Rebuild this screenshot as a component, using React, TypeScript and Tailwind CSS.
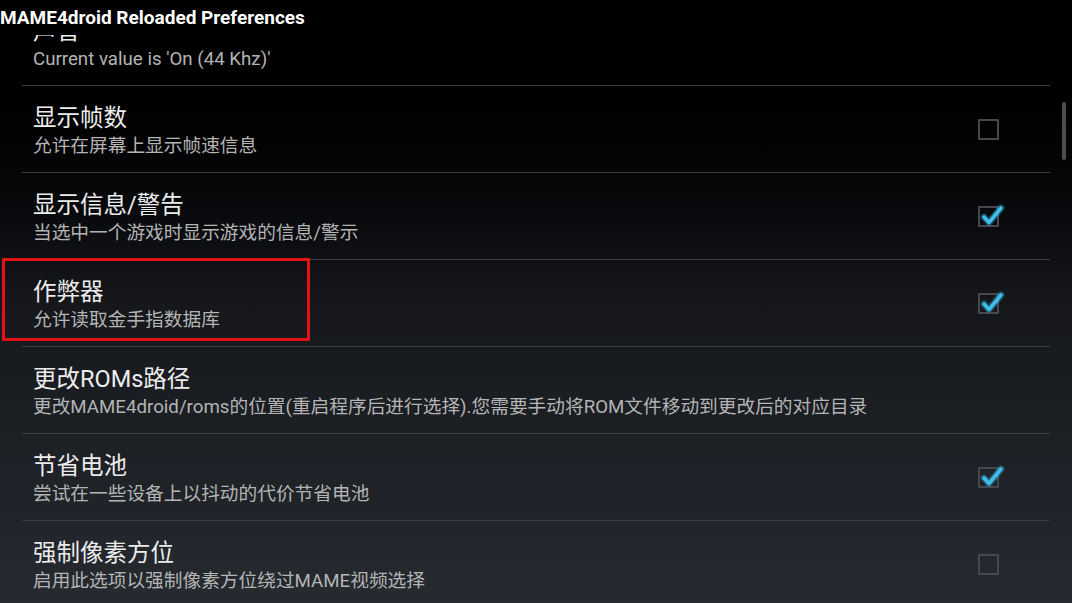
import React from "react";

type Row = { title: string; sub: string; check?: boolean | null };

const rows: Row[] = [
  { title: "声音", sub: "Current value is 'On (44 Khz)'", check: null },
  { title: "显示帧数", sub: "允许在屏幕上显示帧速信息", check: false },
  { title: "显示信息/警告", sub: "当选中一个游戏时显示游戏的信息/警示", check: true },
  { title: "作弊器", sub: "允许读取金手指数据库", check: true },
  { title: "更改ROMs路径", sub: "更改MAME4droid/roms的位置(重启程序后进行选择).您需要手动将ROM文件移动到更改后的对应目录", check: null },
  { title: "节省电池", sub: "尝试在一些设备上以抖动的代价节省电池", check: true },
  { title: "强制像素方位", sub: "启用此选项以强制像素方位绕过MAME视频选择", check: false },
];

function CheckBox({ checked }: { checked: boolean }) {
  return (
    <div className="relative w-[21px] h-[21px] border-2 border-[#45484c] rounded-[1px]">
      {checked && (
        <svg
          className="absolute left-[-2px] top-[-2px] overflow-visible"
          width="28"
          height="26"
          viewBox="0 0 28 26"
        >
          <path
            d="M6 11 L11 16.5 L23 2"
            fill="none"
            stroke="#33b5e5"
            strokeOpacity="0.35"
            strokeWidth="7"
            strokeLinecap="round"
            strokeLinejoin="round"
          />
          <path
            d="M6 11 L11 16.5 L23 2"
            fill="none"
            stroke="#3fbdea"
            strokeWidth="3.6"
            strokeLinecap="round"
            strokeLinejoin="round"
          />
        </svg>
      )}
    </div>
  );
}

export default function App() {
  return (
    <div
      className="relative w-[1072px] h-[603px] overflow-hidden bg-gradient-to-b from-[#000000] via-[#15171b] to-[#262b31]"
      style={{ fontFamily: 'Roboto, "Noto Sans CJK SC", sans-serif' }}
    >
      <div className="mt-[-1px] mx-[22px]">
        {rows.map((r, i) => (
          <div key={i} className="border-b border-[#3a3d41]">
            <div className="h-[86px] flex items-center">
              <div className="flex-1 pl-[11px] pt-[3px]">
                <div className="text-[23.5px] leading-[28px] text-[#ececec]">{r.title}</div>
                <div className="mt-[2px] text-[18.7px] leading-[24px] text-[#b4b4b4] whitespace-nowrap">
                  {r.sub}
                </div>
              </div>
              <div className="w-[21px] mr-[51px]">
                {r.check !== null && r.check !== undefined && <CheckBox checked={r.check} />}
              </div>
            </div>
          </div>
        ))}
      </div>

      <div className="absolute left-0 top-0 w-full h-[35px] bg-black flex items-center">
        <span className="text-[19px] font-bold text-white leading-none">
          MAME4droid Reloaded Preferences
        </span>
      </div>

      <div className="absolute left-[1062px] top-[102px] w-[4px] h-[58px] rounded-full bg-[#4a4d51]" />

      <div className="absolute left-[2px] top-[258px] w-[308px] h-[83px] border-[3px] border-[#e01414]" />
    </div>
  );
}
